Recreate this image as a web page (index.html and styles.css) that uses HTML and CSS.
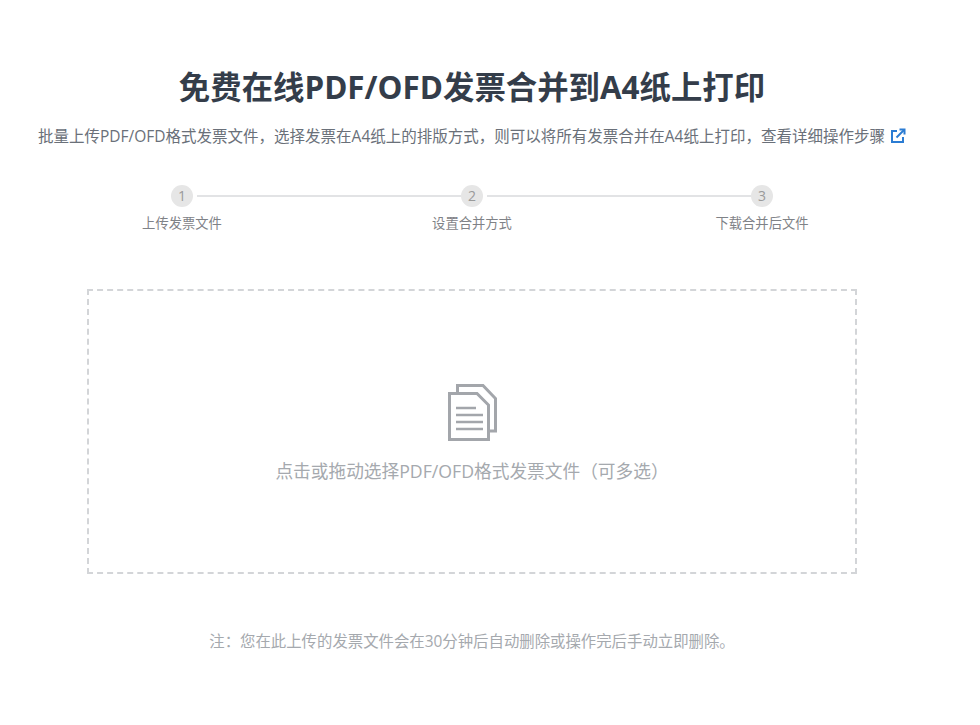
FILE: index.html
```html
<!DOCTYPE html>
<html lang="zh-CN">
<head>
<meta charset="utf-8">
<title>免费在线PDF/OFD发票合并到A4纸上打印</title>
<link rel="stylesheet" href="styles.css">
</head>
<body>
<main class="page">
  <h1 class="title">免费在线PDF/OFD发票合并到A4纸上打印</h1>
  <p class="intro">批量上传PDF/OFD格式发票文件，选择发票在A4纸上的排版方式，则可以将所有发票合并在A4纸上打印，查看详细操作步骤
    <svg class="ext-icon" viewBox="0 0 16 16" width="16" height="16" fill="none" stroke="#2b7cd3" stroke-width="2"><path d="M7 3H2v11h11V9"/><path d="M6.5 9.5 14 2"/><path d="M9.5 1.5h5v5"/></svg>
  </p>
  <ol class="steps">
    <li class="step"><span class="dot">1</span><span class="label">上传发票文件</span></li>
    <li class="step"><span class="dot">2</span><span class="label">设置合并方式</span></li>
    <li class="step"><span class="dot">3</span><span class="label">下载合并后文件</span></li>
  </ol>
  <section class="drop">
    <svg class="doc-icon" viewBox="0 0 53 61" width="53" height="61" fill="none" stroke="#a3a6ab" stroke-width="3">
      <path d="M11.5 11.5V3.5H37L49.5 16.5V49H42.5"/>
      <path d="M3.5 11.5H31L42.5 23V57.5H3.5Z"/>
      <path d="M10 26H30M10 33H37M10 40H37M10 47H37" stroke-width="2.5"/>
    </svg>
    <p class="drop-text">点击或拖动选择PDF/OFD格式发票文件（可多选）</p>
  </section>
  <p class="note">注：您在此上传的发票文件会在30分钟后自动删除或操作完后手动立即删除。</p>
</main>
</body>
</html>
```
FILE: styles.css
```css
* { box-sizing: border-box; }
html, body { margin: 0; padding: 0; background: #fff; }
body { font-family: "Open Sans", "Noto Sans CJK SC", sans-serif; }
.page { width: 944px; padding-top: 65px; display: flex; flex-direction: column; align-items: center; }
.title { margin: 0; font-size: 31.4px; line-height: 44px; font-weight: 700; color: #343d4a; white-space: nowrap; }
.intro { margin: 16px 0 0; font-size: 15.5px; line-height: 22px; color: #6a7079; white-space: nowrap; }
.ext-icon { vertical-align: -2px; margin-left: 1px; }
.steps { list-style: none; margin: 38px 0 0; padding: 0; width: 870px; display: grid; grid-template-columns: repeat(3, 1fr); }
.step { position: relative; display: flex; flex-direction: column; align-items: center; }
.step:not(:last-child)::after { content: ""; position: absolute; left: 160px; width: 265px; top: 10px; height: 2px; background: #e2e3e5; }
.dot { width: 22px; height: 22px; border-radius: 50%; background: #e6e6e6; color: #9a9a9a; font-size: 14px; line-height: 22px; text-align: center; }
.label { margin-top: 7px; font-size: 13.3px; line-height: 18px; color: #7f8287; }
.drop { margin-top: 57px; width: 770px; height: 285px; border: 2px dashed #d3d5d8; display: flex; flex-direction: column; align-items: center; padding-top: 91px; }
.doc-icon { display: block; }
.drop-text { margin: 15px 0 0; font-size: 17.7px; line-height: 26px; color: #a5a9ae; white-space: nowrap; }
.note { margin: 57px 0 0; font-size: 15.4px; line-height: 22px; color: #a5a9ae; white-space: nowrap; }
```
